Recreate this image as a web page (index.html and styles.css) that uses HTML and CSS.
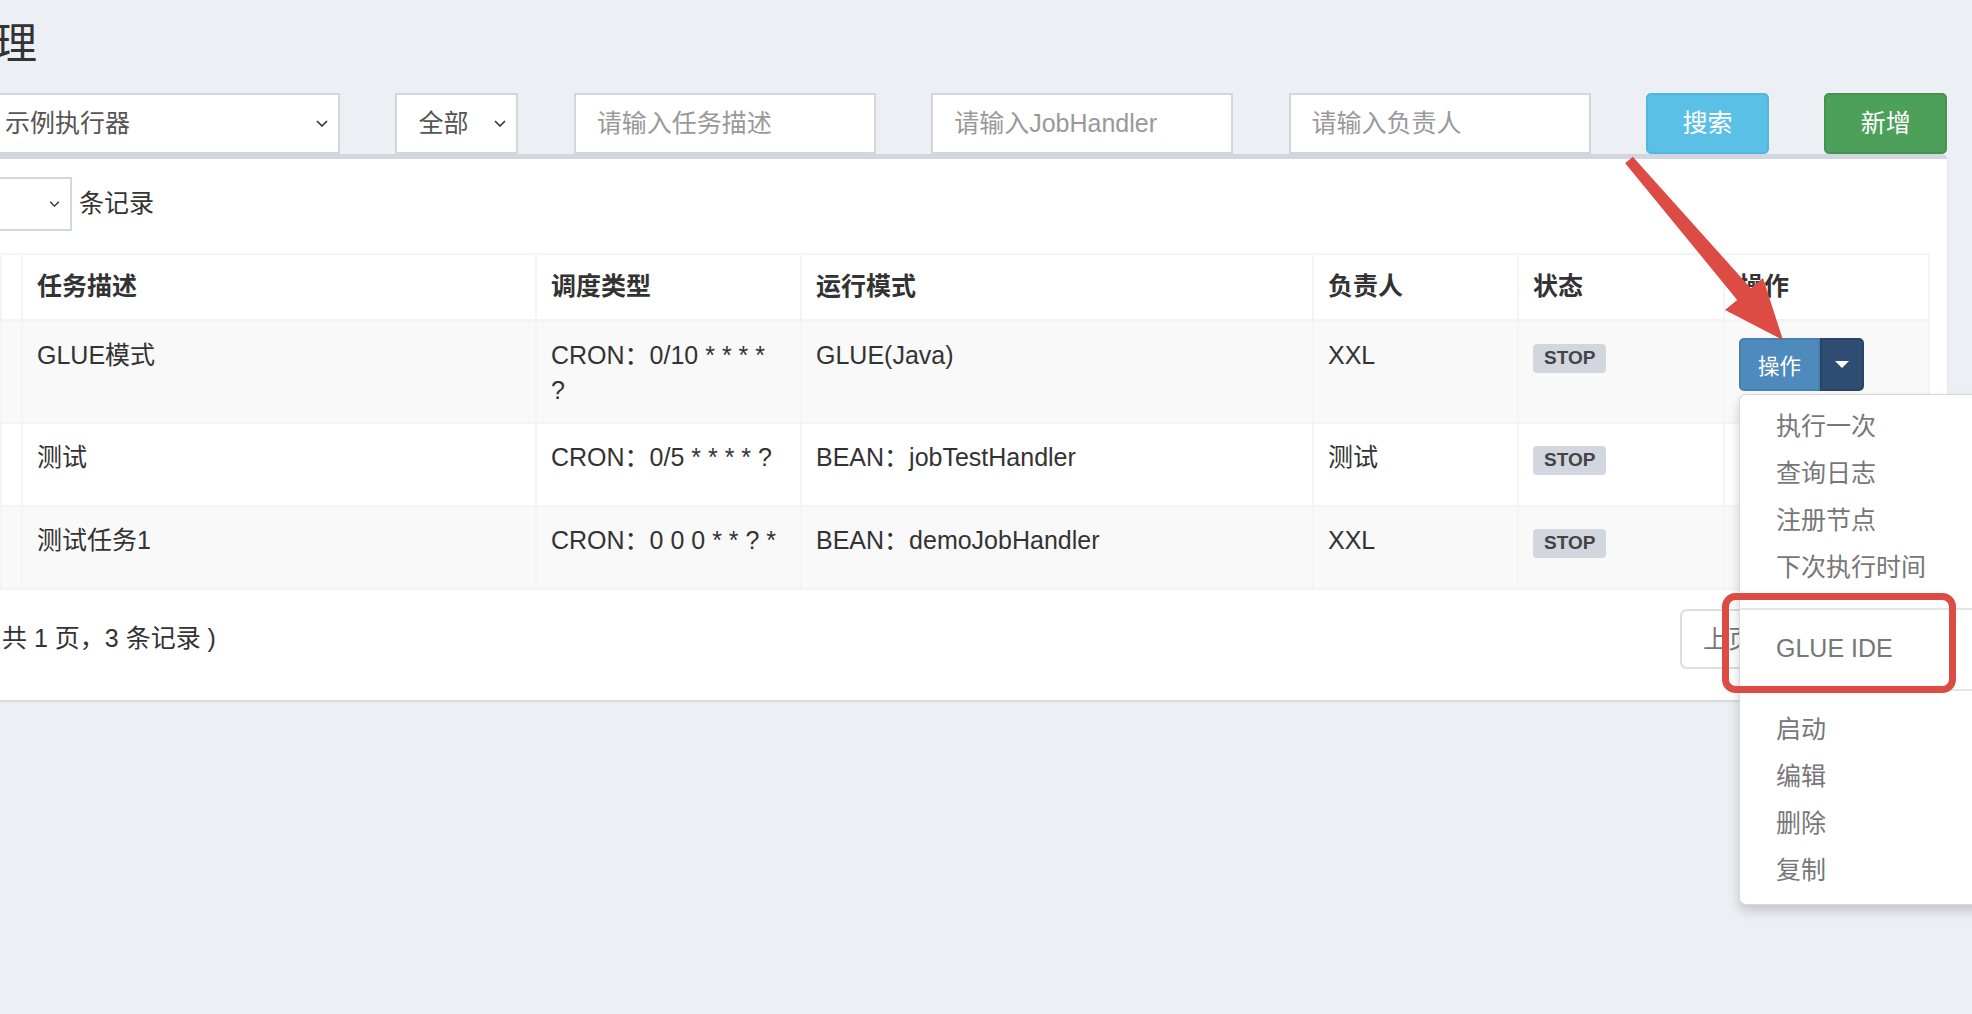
FILE: index.html
```html
<!DOCTYPE html>
<html lang="zh-CN">
<head>
    <meta charset="UTF-8">
    <meta name="viewport" content="width=device-width, initial-scale=1.0">
    <title>任务管理 - 调度中心</title>
    <link rel="stylesheet" href="styles.css">
</head>
<body>
    <div class="content">
        <h1 class="page-title">理</h1>

        <!-- Filtros -->
        <div class="filters">
            <div class="select-wrap select-group">
                <select class="form-control"><option>示例执行器</option></select>
                <svg class="chevron" viewBox="0 0 12 7"><polyline points="1,1 6,6 11,1" fill="none" stroke="#333" stroke-width="1.6"/></svg>
            </div>
            <div class="select-wrap select-status">
                <select class="form-control"><option>全部</option></select>
                <svg class="chevron" viewBox="0 0 12 7"><polyline points="1,1 6,6 11,1" fill="none" stroke="#333" stroke-width="1.6"/></svg>
            </div>
            <input type="text" class="form-control filter-input" placeholder="请输入任务描述">
            <input type="text" class="form-control filter-input" placeholder="请输入JobHandler">
            <input type="text" class="form-control filter-input" placeholder="请输入负责人">
            <button class="btn btn-info">搜索</button>
            <button class="btn btn-success">新增</button>
        </div>

        <!-- Lista de tarefas -->
        <div class="box">
            <div class="box-body">
                <div class="length-row">
                    <div class="select-wrap select-length">
                        <select class="form-control input-sm"><option>10</option></select>
                        <svg class="chevron chevron-sm" viewBox="0 0 12 7"><polyline points="1,1 6,6 11,1" fill="none" stroke="#333" stroke-width="1.6"/></svg>
                    </div>
                    <span>条记录</span>
                </div>

                <table class="job-table">
                    <colgroup>
                        <col style="width: 21px">
                        <col style="width: 514px">
                        <col style="width: 265px">
                        <col style="width: 512px">
                        <col style="width: 205px">
                        <col style="width: 206px">
                        <col style="width: 205px">
                    </colgroup>
                    <thead>
                        <tr>
                            <th></th>
                            <th>任务描述</th>
                            <th>调度类型</th>
                            <th>运行模式</th>
                            <th>负责人</th>
                            <th>状态</th>
                            <th>操作</th>
                        </tr>
                    </thead>
                    <tbody>
                        <tr>
                            <td></td>
                            <td>GLUE模式</td>
                            <td class="cron">CRON：0/10 * * * * ?</td>
                            <td>GLUE(Java)</td>
                            <td>XXL</td>
                            <td><span class="label">STOP</span></td>
                            <td>
                                <div class="btn-group">
                                    <button class="btn-op">操作</button>
                                    <button class="btn-caret"><span class="caret"></span></button>
                                    <ul class="dropdown-menu">
                                        <li><a href="#">执行一次</a></li>
                                        <li><a href="#">查询日志</a></li>
                                        <li><a href="#">注册节点</a></li>
                                        <li><a href="#">下次执行时间</a></li>
                                        <li class="divider"></li>
                                        <li><a href="#">GLUE IDE</a></li>
                                        <li class="divider"></li>
                                        <li><a href="#">启动</a></li>
                                        <li><a href="#">编辑</a></li>
                                        <li><a href="#">删除</a></li>
                                        <li><a href="#">复制</a></li>
                                    </ul>
                                </div>
                            </td>
                        </tr>
                        <tr>
                            <td></td>
                            <td>测试</td>
                            <td class="cron">CRON：0/5 * * * * ?</td>
                            <td>BEAN：jobTestHandler</td>
                            <td>测试</td>
                            <td><span class="label">STOP</span></td>
                            <td class="op-cell"></td>
                        </tr>
                        <tr>
                            <td></td>
                            <td>测试任务1</td>
                            <td class="cron">CRON：0 0 0 * * ? *</td>
                            <td>BEAN：demoJobHandler</td>
                            <td>XXL</td>
                            <td><span class="label">STOP</span></td>
                            <td class="op-cell"></td>
                        </tr>
                    </tbody>
                </table>

                <div class="table-footer">
                    <div class="info">共 1 页，3 条记录 )</div>
                    <ul class="pagination">
                        <li class="disabled"><a href="#">上页</a></li>
                        <li class="active"><a href="#">1</a></li>
                        <li class="disabled"><a href="#">下页</a></li>
                    </ul>
                </div>
            </div>
        </div>
    </div>

    <!-- Marcações em vermelho -->
    <svg class="annotation" viewBox="0 0 1972 1014">
        <polygon points="1632.8,156.8 1750.8,288.2 1763,278 1783,340 1725,310 1737.2,299.9 1625.2,163.3" fill="#dc4c44"/>
        <rect x="1725.5" y="596.5" width="227" height="93" rx="10" fill="none" stroke="#dc4c44" stroke-width="7"/>
    </svg>
</body>
</html>
```

FILE: styles.css
```css
* {
    box-sizing: border-box;
}

body {
    margin: 0;
    width: 1972px;
    height: 1014px;
    overflow: hidden;
    position: relative;
    background-color: #ecf0f5;
    font-family: "Liberation Sans", "Noto Sans CJK SC", sans-serif;
    font-size: 25px;
    line-height: 1.42857;
    color: #333;
}

.page-title {
    margin: 0 0 0 -6px;
    padding-top: 21px;
    font-size: 43px;
    line-height: 47px;
    font-weight: 400;
    color: #333;
}

.filters {
    display: flex;
    gap: 55.4px;
    height: 61px;
    margin: 25px 0 0 -18px;
}

.form-control {
    display: block;
    height: 61px;
    padding: 0 21px;
    border: 2px solid #d2d6de;
    border-radius: 0;
    background-color: #fff;
    font: inherit;
    color: #555;
    outline: none;
}

.form-control::placeholder {
    color: #999;
}

select.form-control {
    width: 100%;
    appearance: none;
    -webkit-appearance: none;
}

.select-wrap {
    position: relative;
    flex: none;
}

.select-group {
    width: 358px;
}

.select-status {
    width: 123px;
}

.filter-input {
    flex: none;
    width: 302px;
}

.chevron {
    position: absolute;
    right: 12px;
    top: 27px;
    width: 12px;
    height: 7px;
    pointer-events: none;
}

.chevron-sm {
    top: 24px;
    width: 11px;
    height: 6px;
}

.btn {
    flex: none;
    width: 123px;
    height: 61px;
    padding: 0;
    border: 2px solid transparent;
    border-radius: 5px;
    font: inherit;
    color: #fff;
    cursor: pointer;
}

.btn-info {
    background-color: #5bc0e6;
    border-color: #52b5dc;
}

.btn-success {
    background-color: #4ca05a;
    border-color: #449351;
}

.box {
    width: 1965px;
    margin-left: -18px;
    background-color: #fff;
    border-top: 5px solid #d2d6de;
    border-radius: 5px;
    box-shadow: 0 2px 2px rgba(0, 0, 0, 0.1);
}

.box-body {
    padding: 18px 19px 31px 18px;
}

.length-row {
    display: flex;
    align-items: center;
    height: 54px;
}

.select-length {
    width: 133px;
    margin-left: -61px;
}

.input-sm {
    height: 54px;
    padding: 0 16px;
    font-size: 21px;
}

.length-row span {
    margin-left: 7px;
}

.job-table {
    width: 1928px;
    margin-top: 22px;
    table-layout: fixed;
    border-collapse: collapse;
}

.job-table th, .job-table td {
    padding: 14px;
    border: 2px solid #f4f4f4;
    text-align: left;
    vertical-align: top;
    line-height: 35.7px;
}

.job-table td {
    padding-top: 16px;
    padding-bottom: 13px;
}

.job-table th {
    font-weight: 700;
    border-bottom-width: 3px;
    vertical-align: bottom;
}

.job-table td.cron {
    padding-right: 18px;
}

.job-table td.op-cell {
    height: 83px;
}

.job-table tbody tr:nth-child(odd) {
    background-color: #f9f9f9;
}

.label {
    display: inline-block;
    padding: 4px 11px 6px;
    font-size: 19px;
    font-weight: 700;
    line-height: 1;
    color: #444;
    background-color: #d2d6de;
    border-radius: 4px;
}

.btn-group {
    position: relative;
    display: inline-flex;
    vertical-align: top;
}

.btn-op {
    height: 53px;
    padding: 0 17px;
    font-family: inherit;
    font-size: 21.5px;
    color: #fff;
    background-color: #4f8abd;
    border: 2px solid #477fb1;
    border-radius: 5px 0 0 5px;
}

.btn-caret {
    display: flex;
    align-items: center;
    justify-content: center;
    width: 44px;
    height: 53px;
    padding: 0;
    background-color: #2f4d72;
    border: 2px solid #2a4466;
    border-radius: 0 5px 5px 0;
}

.caret {
    width: 0;
    height: 0;
    border-top: 7px solid #fff;
    border-left: 7px solid transparent;
    border-right: 7px solid transparent;
}

.dropdown-menu {
    position: absolute;
    top: 100%;
    left: 0;
    z-index: 1000;
    min-width: 285px;
    margin: 3px 0 0;
    padding: 9px 0;
    list-style: none;
    background-color: #fff;
    border: 1px solid rgba(0, 0, 0, 0.15);
    border-radius: 7px;
    box-shadow: 0 6px 12px rgba(0, 0, 0, 0.175);
}

.dropdown-menu li a {
    display: block;
    padding: 5.6px 36px;
    line-height: 35.8px;
    font-size: 25px;
    color: #777;
    white-space: nowrap;
    text-decoration: none;
}

.dropdown-menu .divider {
    height: 2px;
    margin: 16px 0;
    background-color: #e5e5e5;
}

.table-footer {
    display: flex;
    justify-content: space-between;
    align-items: center;
    margin-top: 19px;
}

.info {
    margin-left: 2px;
}

.pagination {
    display: flex;
    margin: 0;
    padding: 0;
    list-style: none;
}

.pagination li a {
    display: block;
    height: 60px;
    padding: 0 21px;
    margin-left: -2px;
    line-height: 56px;
    color: #777;
    background-color: #fff;
    border: 2px solid #ddd;
    text-decoration: none;
}

.pagination li:first-child a {
    margin-left: 0;
    border-radius: 7px 0 0 7px;
}

.pagination li:last-child a {
    border-radius: 0 7px 7px 0;
}

.pagination .active a {
    color: #fff;
    background-color: #3c8dbc;
    border-color: #367fa9;
}

.annotation {
    position: absolute;
    top: 0;
    left: 0;
    width: 1972px;
    height: 1014px;
    z-index: 2000;
    pointer-events: none;
}
```
